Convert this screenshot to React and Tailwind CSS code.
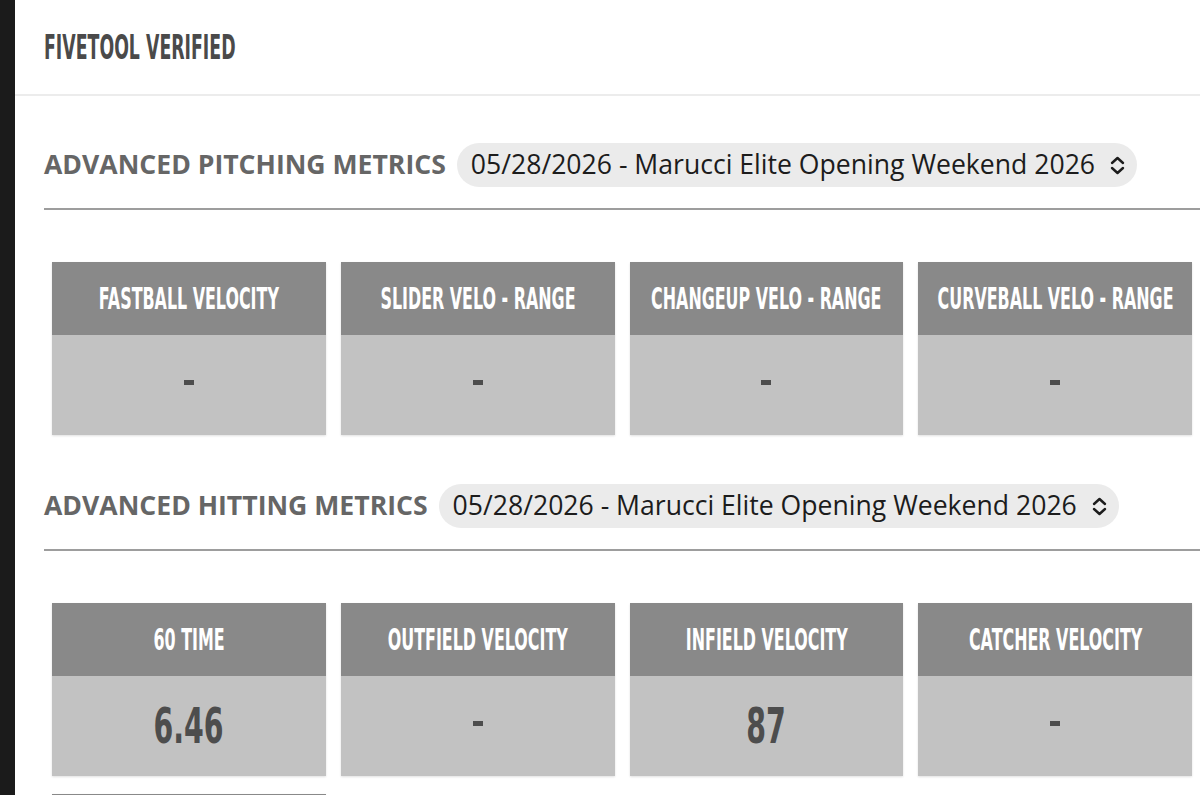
const pitching = [
  { label: "FASTBALL VELOCITY", value: "-" },
  { label: "SLIDER VELO - RANGE", value: "-" },
  { label: "CHANGEUP VELO - RANGE", value: "-" },
  { label: "CURVEBALL VELO - RANGE", value: "-" },
];

const hitting = [
  { label: "60 TIME", value: "6.46" },
  { label: "OUTFIELD VELOCITY", value: "-" },
  { label: "INFIELD VELOCITY", value: "87" },
  { label: "CATCHER VELOCITY", value: "-" },
  { label: "EXIT VELOCITY", value: "-" },
];

const EVENT = "05/28/2026 - Marucci Elite Opening Weekend 2026";

/* condensed display type, squeezed horizontally */
function Squeeze({ children, className = "" }) {
  return (
    <span
      className={
        "inline-block whitespace-nowrap font-['Liberation_Sans_Narrow','DejaVu_Sans',sans-serif] font-bold " +
        className
      }
    >
      {children}
    </span>
  );
}

function UpDown() {
  return (
    <svg width="15" height="19" viewBox="0 0 15 19" fill="none" stroke="#1c1c1c" strokeWidth="2.4" strokeLinecap="round" strokeLinejoin="round">
      <path d="M2 7 L7.5 2 L13 7" />
      <path d="M2 12 L7.5 17 L13 12" />
    </svg>
  );
}

function StatCard({ label, value }) {
  const dash = value === "-";
  return (
    <div className="shadow-[0_1px_2px_rgba(0,0,0,0.12)]">
      <div className="h-[73px] bg-[#898989] flex items-center justify-center overflow-hidden">
        <Squeeze className="text-[30px] leading-none text-white scale-x-[0.53]">{label}</Squeeze>
      </div>
      <div className="h-[100px] bg-[#c2c2c2] flex items-center justify-center overflow-hidden">
        {dash ? (
          <span className="block w-[10px] h-[5px] bg-[#4d4d4d] mt-[-6px]" />
        ) : (
          <Squeeze className="text-[49px] leading-none text-[#4d4d4d] scale-x-[0.58]">{value}</Squeeze>
        )}
      </div>
    </div>
  );
}

function EventSelect() {
  return (
    <div className="flex items-center h-[44px] rounded-full bg-[#ebebeb] pl-[14px] pr-[12px] gap-[15px]">
      <span className="font-['Open_Sans',sans-serif] text-[26.6px] text-[#1c1c1c] whitespace-nowrap">{EVENT}</span>
      <UpDown />
    </div>
  );
}

function MetricSection({ title, items }) {
  return (
    <section>
      <div className="flex items-center gap-[11px] h-[44px]">
        <h2 className="font-['Open_Sans',sans-serif] font-bold text-[26.6px] text-[#666] whitespace-nowrap">{title}</h2>
        <EventSelect />
      </div>
      <div className="mt-[21px] h-[2px] bg-[#9d9d9d] mr-[-16px]" />
      <div className="grid grid-cols-4 gap-x-[15px] gap-y-[18px] px-[8px] pt-[52px]">
        {items.map((m) => (
          <StatCard key={m.label} {...m} />
        ))}
      </div>
    </section>
  );
}

export default function App() {
  return (
    <div className="flex h-[795px] overflow-hidden bg-white">
      <div className="w-[15px] shrink-0 bg-[#1b1b1b]" />
      <main className="flex-1 min-w-0">
        <header className="h-[96px] border-b-2 border-[#ececec] flex items-center pl-[29px]">
          <Squeeze className="origin-left text-[34px] leading-none text-[#4a4a4a] scale-x-[0.51]">FIVETOOL VERIFIED</Squeeze>
        </header>
        <div className="pl-[29px] pt-[47px] space-y-[49px]">
          <MetricSection title="ADVANCED PITCHING METRICS" items={pitching} />
          <MetricSection title="ADVANCED HITTING METRICS" items={hitting} />
        </div>
      </main>
    </div>
  );
}
